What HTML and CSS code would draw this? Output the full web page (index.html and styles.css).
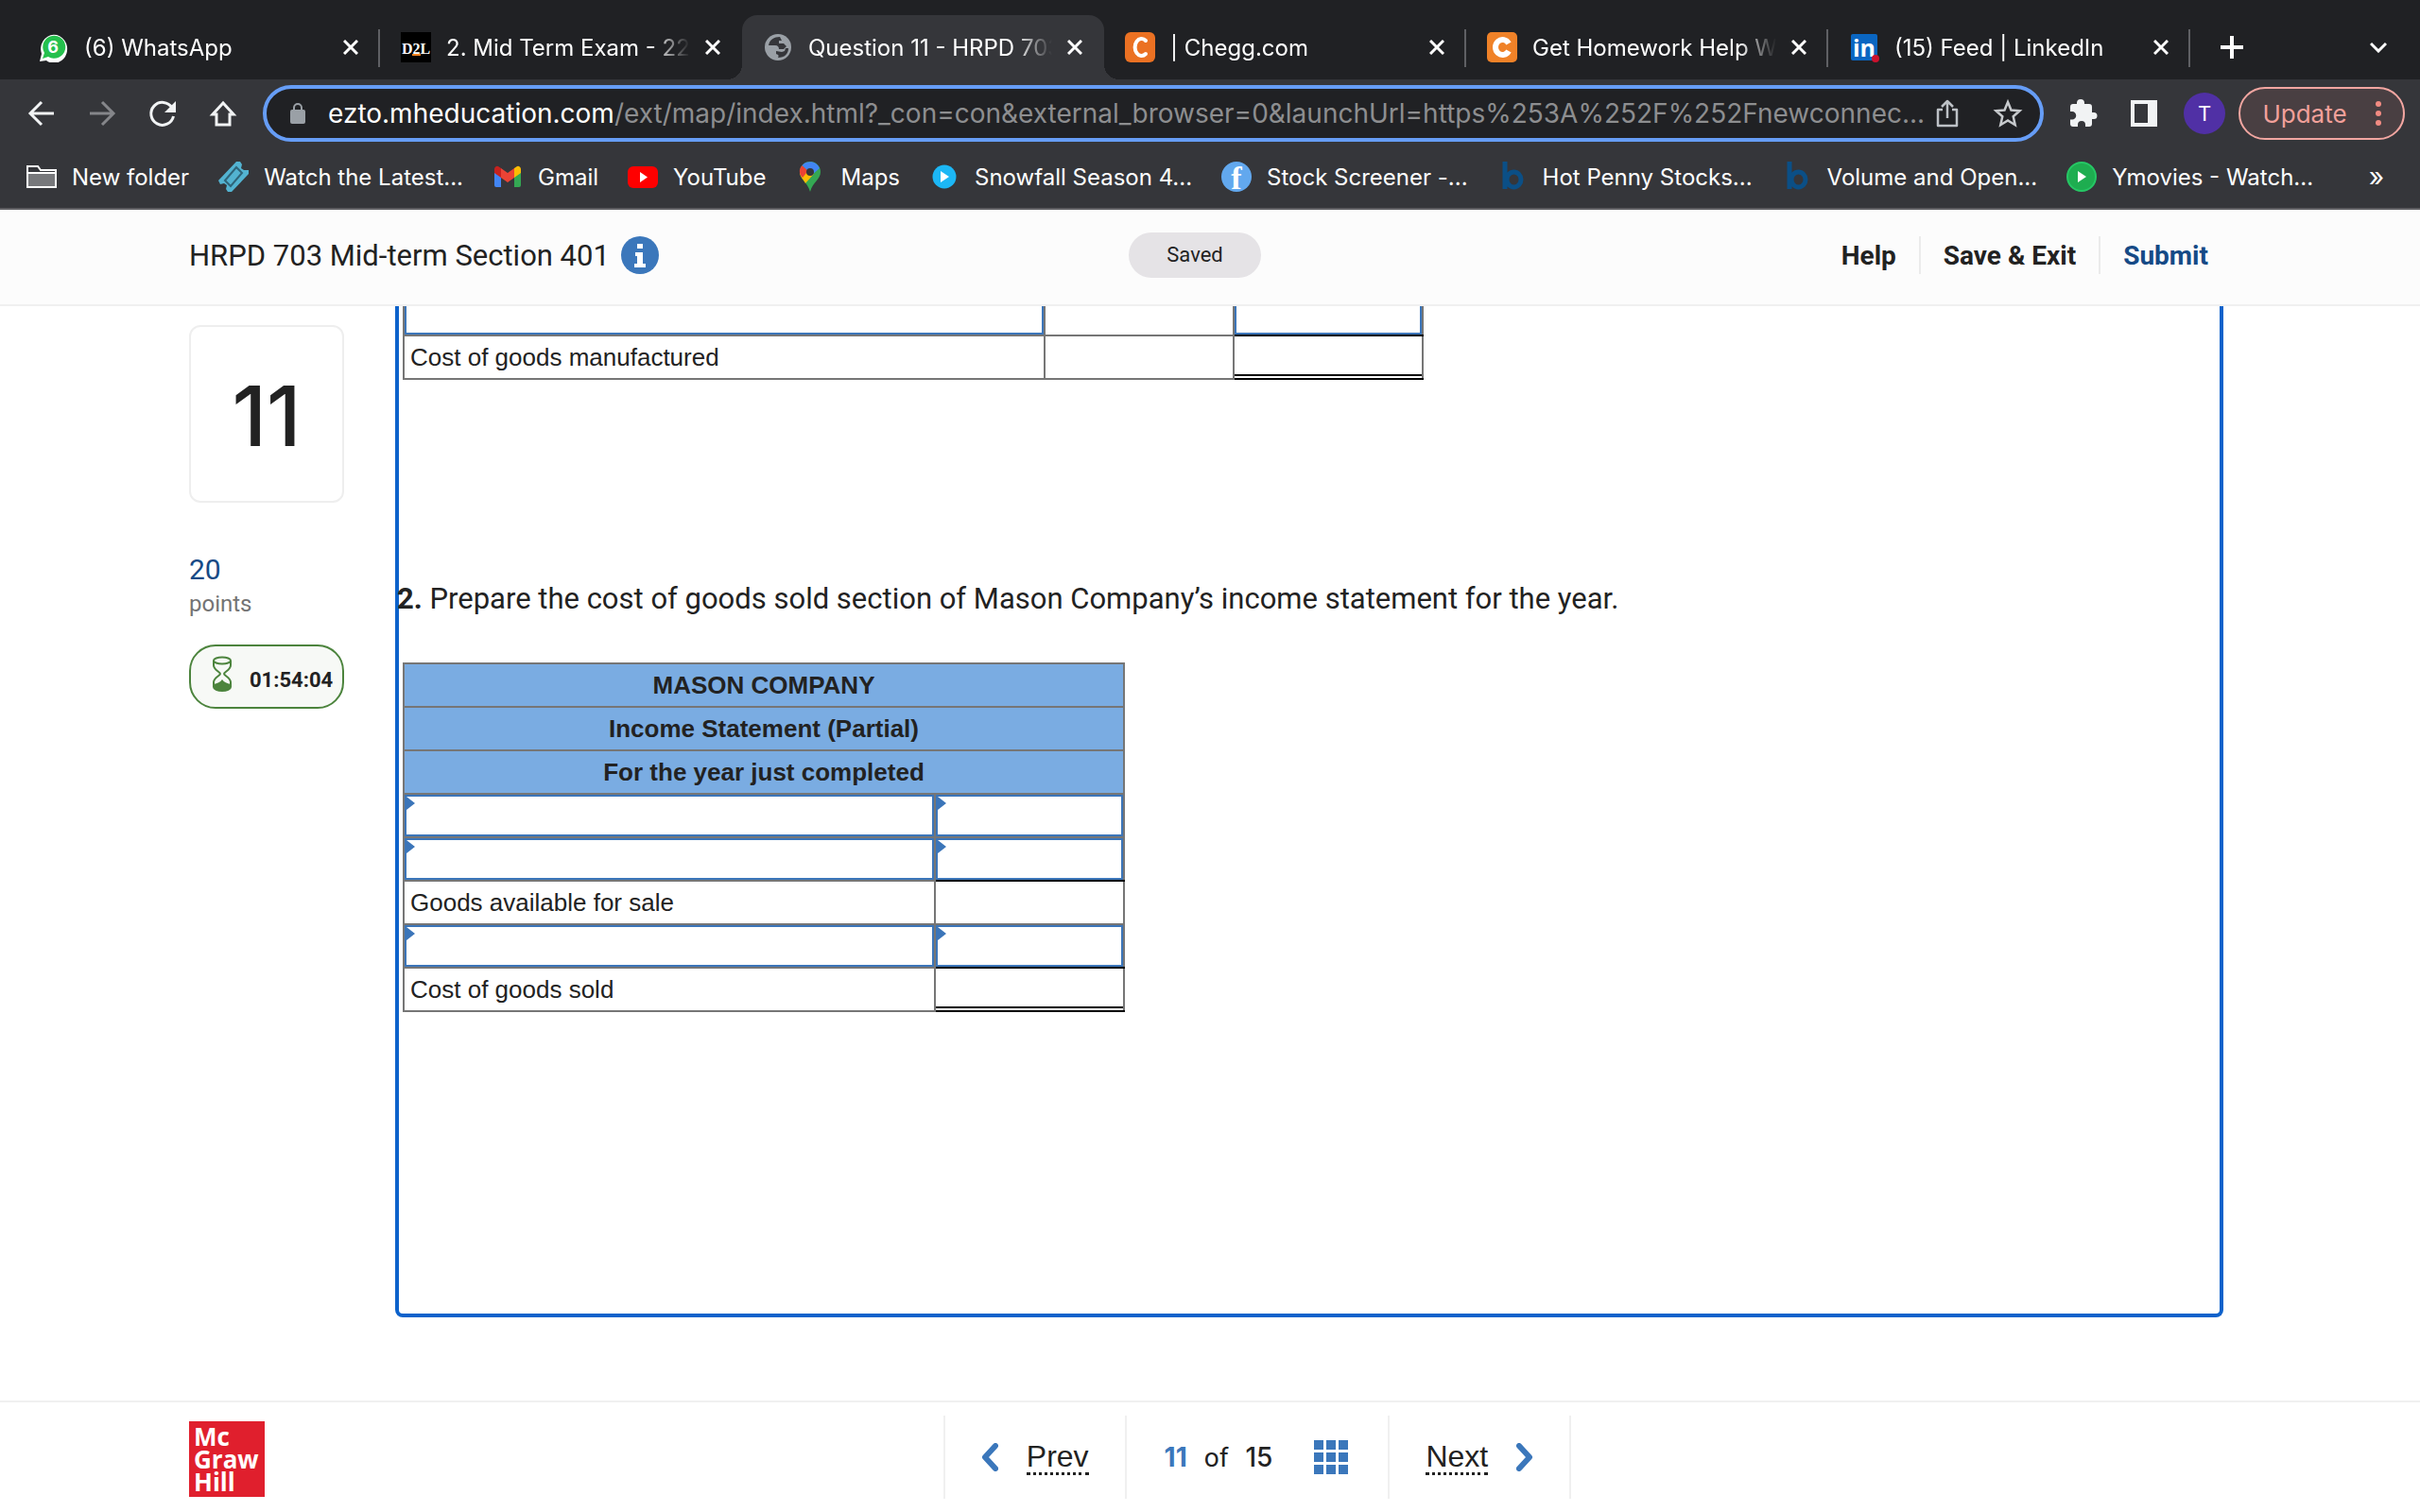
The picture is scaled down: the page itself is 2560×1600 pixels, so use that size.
FILE: index.html
```html
<!DOCTYPE html>
<html lang="en">
<head>
    <meta charset="utf-8">
    <title>Question 11 - HRPD 703 Mid-term Section 401</title>
    <link rel="stylesheet" href="styles.css">
</head>
<body>
    <!-- shared icons -->
    <svg width="0" height="0" class="defs">
        <symbol id="x" viewBox="0 0 16 16"><path d="M1 1l14 14M15 1L1 15" stroke="currentColor" stroke-width="3" fill="none"/></symbol>
        <symbol id="chevron" viewBox="0 0 18 30"><path d="M15 3L4 15l11 12" stroke="currentColor" stroke-width="6" stroke-linecap="round" stroke-linejoin="round" fill="none"/></symbol>
        <symbol id="bar" viewBox="0 0 32 32"><path d="M8 0v29M10 19a7.500 8 0 1 1 15 0a7.500 8 0 1 1-15 0" stroke="#0b4f86" stroke-width="5" fill="none"/></symbol>
    </svg>

    <div class="tabs">
        <div class="tab">
            <svg class="icon" viewBox="0 0 32 32"><path d="M1 31l2-8A14 15 0 1 1 8 30z" fill="#fff"/><path d="M4 28l2-6a12 12 0 1 1 4 4z" fill="#25c04d"/><text x="15" y="22" text-anchor="middle" class="badge-text">6</text></svg>
            <button class="tab-title">(6) WhatsApp</button>
            <button class="close" aria-label="Close tab"><svg><use href="#x"/></svg></button>
        </div>
        <div class="tab">
            <svg class="icon" viewBox="0 0 32 32"><rect width="32" height="32"/><text x="16" y="23" text-anchor="middle" class="d2l-text">D2L</text><path d="M12 23h9v2h-9z" fill="#f58220"/></svg>
            <button class="tab-title">2. Mid Term Exam - 22F --</button>
            <button class="close" aria-label="Close tab"><svg><use href="#x"/></svg></button>
        </div>
        <div class="tab active">
            <svg class="icon" viewBox="0 0 32 32"><circle cx="16" cy="16" r="14" fill="#9aa0a6"/><path d="M18 5c-6 0-11 3-12 9h7c3 0 4 2 4 4h5l3-3-3-3h-5V9h3zM27 17c0 6-4 10-11 10 1-2 1-3-2-4v-3l6 1 3-1 1-3z" fill="#35363a"/></svg>
            <button class="tab-title">Question 11 - HRPD 703 Mid</button>
            <button class="close" aria-label="Close tab"><svg><use href="#x"/></svg></button>
        </div>
        <div class="tab">
            <svg class="icon" viewBox="0 0 32 32"><rect width="32" height="32" rx="6" fill="#eb7123"/><path d="M22 9A7 9 0 1 0 22 23" stroke="#fff" stroke-width="4" stroke-linecap="round" fill="none"/></svg>
            <button class="tab-title">| Chegg.com</button>
            <button class="close" aria-label="Close tab"><svg><use href="#x"/></svg></button>
        </div>
        <div class="tab">
            <svg class="icon" viewBox="0 0 32 32"><rect width="32" height="32" rx="5" fill="#f08228"/><path d="M23 12A7.500 8 0 1 0 23 20" stroke="#fff" stroke-width="6" fill="none"/></svg>
            <button class="tab-title">Get Homework Help With</button>
            <button class="close" aria-label="Close tab"><svg><use href="#x"/></svg></button>
        </div>
        <div class="tab">
            <svg class="icon" viewBox="0 0 32 32"><rect x="2" y="2" width="28" height="28" rx="2" fill="#0a66c2"/><text x="16" y="26" text-anchor="middle" class="in-text">in</text><circle cx="28" cy="28" r="4" fill="#cb112d"/></svg>
            <button class="tab-title">(15) Feed | LinkedIn</button>
            <button class="close" aria-label="Close tab"><svg><use href="#x"/></svg></button>
        </div>
        <button class="new-tab" aria-label="New tab"><svg width="24" height="24" viewBox="0 0 24 24"><path d="M12 0v24M0 12h24" stroke="#fff" stroke-width="4"/></svg></button>
        <button class="tab-list" aria-label="Search tabs"><svg width="18" height="12" viewBox="0 0 18 12"><path d="M1 2l8 8 8-8" stroke="#fff" stroke-width="3" fill="none"/></svg></button>
    </div>

    <div class="toolbar">
        <button aria-label="Back"><svg class="icon" viewBox="0 0 32 32"><path d="M29 16H5M16 4L4 16l12 12" stroke="#f1f3f4" stroke-width="3" fill="none"/></svg></button>
        <button aria-label="Forward"><svg class="icon" viewBox="0 0 32 32"><path d="M3 16h24M16 4l12 12-12 12" stroke="#85868a" stroke-width="3" fill="none"/></svg></button>
        <button aria-label="Reload"><svg class="icon" viewBox="0 0 32 32"><path d="M26 10A12 12 0 1 0 27.500 19" stroke="#f1f3f4" stroke-width="3" fill="none"/><path d="M30 3v12H18z" fill="#f1f3f4"/></svg></button>
        <button aria-label="Home"><svg class="icon" viewBox="0 0 32 32"><path d="M16 5L5 17h4v11h14V17h4z" stroke="#f1f3f4" stroke-width="3" fill="none"/></svg></button>
        <div class="omnibox">
            <svg width="16" height="24" viewBox="0 0 16 24" class="lock"><rect y="8" width="16" height="15" rx="2" fill="#9aa0a6"/><path d="M4 9V6a4 4 0 0 1 8 0v3" stroke="#9aa0a6" stroke-width="2" fill="none"/></svg>
            <label for="url">ezto.mheducation.com</label>
            <input id="url" type="text" value="/ext/map/index.html?_con=con&amp;external_browser=0&amp;launchUrl=https%253A%252F%252Fnewconnec...">
            <button aria-label="Share"><svg class="icon" viewBox="0 0 32 32"><path d="M11 12H6v17h20V12h-5M16 21V4M10 9l6-6 6 6" stroke="#bdc1c6" stroke-width="2.500" fill="none" stroke-linejoin="round"/></svg></button>
            <button aria-label="Bookmark this tab"><svg class="icon" viewBox="0 0 32 32"><path d="M16 4l3.500 8.500 9 .8-6.800 6 2 8.900L16 23.500l-7.700 4.700 2-8.900-6.800-6 9-.8z" stroke="#c7cacd" stroke-width="2.500" fill="none"/></svg></button>
        </div>
        <button aria-label="Extensions"><svg class="icon" viewBox="0 0 32 32"><path d="M27 15h-2V9a3 3 0 0 0-3-3h-5V5a4 4 0 0 0-8 0v1H5a3 3 0 0 0-3 3v5h2a4 4 0 0 1 0 8.500H2V27a3 3 0 0 0 3 3h5v-2a4 4 0 0 1 8 0v2h4a3 3 0 0 0 3-3v-5h2a3.500 3.500 0 0 0 0-7z" fill="#f1f3f4"/></svg></button>
        <button aria-label="Side panel"><svg class="icon" viewBox="0 0 32 32"><path d="M2 2h28v28H2zM6 6v20h14V6z" fill="#f1f3f4" fill-rule="evenodd"/></svg></button>
        <button class="avatar">T</button>
        <button class="update">Update <svg width="6" height="26" viewBox="0 0 6 26"><g fill="#f28b82"><circle cx="3" cy="3" r="3"/><circle cx="3" cy="13" r="3"/><circle cx="3" cy="23" r="3"/></g></svg></button>
    </div>

    <nav class="bookmarks">
        <a href="#"><svg class="icon" viewBox="0 0 32 32"><path d="M1 27V5h11l3 4h16v18z" fill="#35363a" stroke="#fff" stroke-width="2"/><path d="M2 13h28v13H2z" fill="#77787b"/><path d="M1 12h30" stroke="#fff" stroke-width="2"/></svg>New folder</a>
        <a href="#"><svg class="icon" viewBox="0 0 32 32"><path d="M19 0h4l2 3-1 4 3 2h5v4L14 32h-4l-2-3 1-4-3-2-4 1-2-4z" fill="#53b3d1"/><path d="M19 6l6 6-12 14-6-6z" fill="none" stroke="#2f6478" stroke-width="2"/></svg>Watch the Latest...</a>
        <a href="#"><svg class="icon" viewBox="0 0 32 32"><path d="M2 8v17a2 2 0 0 0 2 2h5V13z" fill="#4285f4"/><path d="M30 8v17a2 2 0 0 1-2 2h-5V13z" fill="#34a853"/><path d="M23 7l3-2a3 3 0 0 1 4 3v4l-7 5z" fill="#fbbc04"/><path d="M9 7L6 5a3 3 0 0 0-4 3v4l7 5z" fill="#c5221f"/><path d="M9 7l7 5 7-5v10l-7 5-7-5z" fill="#ea4335"/></svg>Gmail</a>
        <a href="#"><svg class="icon" viewBox="0 0 32 32"><rect y="5" width="32" height="23" rx="6" fill="#f00"/><path d="M13 11v11l8-5.500z" fill="#fff"/></svg>YouTube</a>
        <a href="#"><svg class="icon" viewBox="0 0 32 32"><path d="M16 0a11 11 0 0 1 11 11c0 8-8 10-11 21C13 21 5 19 5 11A11 11 0 0 1 16 0z" fill="#34a853"/><path d="M5 12c1 5 4 7 6 11l9-10-6-4z" fill="#fbbc04"/><path d="M7.500 4L14 9.500 8 17c-3-3-5-8-.5-13z" fill="#ea4335"/><path d="M7.500 4A11 11 0 0 1 26 7l-9 8-4-6z" fill="#4285f4"/><circle cx="16" cy="11" r="4" fill="#35363a"/></svg>Maps</a>
        <a href="#"><svg class="icon" viewBox="0 0 32 32"><circle cx="16" cy="16" r="12.500" fill="#1cb7f5"/><path d="M12 10v12l9-6z" fill="#fff"/></svg>Snowfall Season 4...</a>
        <a href="#"><svg class="icon" viewBox="0 0 32 32"><circle cx="16" cy="16" r="16" fill="#62a8ee"/><text x="16" y="29" text-anchor="middle" class="f-text">f</text></svg>Stock Screener -...</a>
        <a href="#"><svg class="icon"><use href="#bar"/></svg>Hot Penny Stocks...</a>
        <a href="#"><svg class="icon"><use href="#bar"/></svg>Volume and Open...</a>
        <a href="#"><svg class="icon" viewBox="0 0 32 32"><circle cx="16" cy="16" r="15" fill="#1ead50" stroke="#26c765" stroke-width="2"/><path d="M12 10v12l9-6z" fill="#fff"/></svg>Ymovies - Watch...</a>
        <button class="more" aria-label="More bookmarks">»</button>
    </nav>

    <header class="header">
        <div class="title">
            <h1>HRPD 703 Mid-term Section 401</h1>
            <button aria-label="Assignment info"><svg width="40" height="40" viewBox="0 0 40 40"><circle cx="20" cy="20" r="20" fill="#3b77bb"/><path d="M17 8h6v5h-6zM15 17h8v12h3v4H14v-4h3v-8h-2z" fill="#fff"/></svg></button>
        </div>
        <span class="saved">Saved</span>
        <div class="actions">
            <button>Help</button>
            <button>Save &amp; Exit</button>
            <button class="submit">Submit</button>
        </div>
    </header>

    <main>
        <aside>
            <div class="number">11</div>
            <div class="points"><b>20</b>points</div>
            <div class="timer">
                <svg width="22" height="38" viewBox="0 0 22 38"><path d="M2 5v5c0 5 7 7 7 9s-7 4-7 9v5c0 2 4 4 9 4s9-2 9-4v-5c0-5-7-7-7-9s7-4 7-9V5" fill="none" stroke="#4c843d" stroke-width="2"/><ellipse cx="11" cy="5" rx="9" ry="3.500" fill="none" stroke="#4c843d" stroke-width="2"/><path d="M2 30c4-1 7-2 9-5 2 3 5 4 9 5v4c-4 4-14 4-18 0z" fill="#4c843d"/></svg>
                <span>01:54:04</span>
            </div>
        </aside>

        <section class="question">
            <table class="sheet wide">
                <colgroup><col class="wide-label"><col><col></colgroup>
                <tr>
                    <td class="entry"><input type="text" aria-label="Schedule line"></td>
                    <td></td>
                    <td class="entry total"><input type="text" aria-label="Schedule amount"></td>
                </tr>
                <tr>
                    <td>Cost of goods manufactured</td>
                    <td></td>
                    <td class="grand"></td>
                </tr>
            </table>

            <p><b>2.</b> Prepare the cost of goods sold section of Mason Company’s income statement for the year.</p>

            <table class="sheet">
                <colgroup><col class="label"><col></colgroup>
                <tr><th colspan="2">MASON COMPANY</th></tr>
                <tr><th colspan="2">Income Statement (Partial)</th></tr>
                <tr><th colspan="2">For the year just completed</th></tr>
                <tr>
                    <td class="entry"><input type="text" aria-label="Line 1"></td>
                    <td class="entry"><input type="text" aria-label="Amount 1"></td>
                </tr>
                <tr>
                    <td class="entry"><input type="text" aria-label="Line 2"></td>
                    <td class="entry total"><input type="text" aria-label="Amount 2"></td>
                </tr>
                <tr>
                    <td>Goods available for sale</td>
                    <td></td>
                </tr>
                <tr>
                    <td class="entry"><input type="text" aria-label="Line 3"></td>
                    <td class="entry total"><input type="text" aria-label="Amount 3"></td>
                </tr>
                <tr>
                    <td>Cost of goods sold</td>
                    <td class="grand"></td>
                </tr>
            </table>
        </section>
    </main>

    <footer>
        <div class="logo">Mc<br>Graw<br>Hill</div>
        <nav class="pager">
            <a href="#" class="step"><svg class="chevron"><use href="#chevron"/></svg><span>Prev</span></a>
            <div class="count"><b>11</b> <span>of</span> <i>15</i>
                <button aria-label="Question list"><svg width="36" height="36" viewBox="0 0 36 36"><path d="M0 0h10v10H0zM13 0h10v10H13zM26 0h10v10H26zM0 13h10v10H0zM13 13h10v10H13zM26 13h10v10H26zM0 26h10v10H0zM13 26h10v10H13zM26 26h10v10H26z" fill="#3b77bb"/></svg></button>
            </div>
            <a href="#" class="step"><span>Next</span><svg class="chevron next"><use href="#chevron"/></svg></a>
        </nav>
    </footer>
</body>
</html>
```
FILE: styles.css
```css
* {
    box-sizing: border-box;
}
body {
    margin: 0;
    min-height: 100vh;
    display: flex;
    flex-direction: column;
    background: #fff;
    color: #222;
    font-family: Roboto, sans-serif;
}
button {
    padding: 0;
    border: none;
    background: none;
    color: inherit;
    font: inherit;
    cursor: pointer;
}
svg {
    display: block;
    flex: none;
}
a {
    color: inherit;
    text-decoration: none;
}
.defs {
    position: absolute;
}
.icon {
    width: 32px;
    height: 32px;
}

/* browser tabs */
.tabs, .toolbar, .bookmarks {
    display: flex;
    align-items: center;
    color: #fff;
    font-family: Inter, sans-serif;
    font-size: 24px;
}
.tabs {
    height: 84px;
    padding: 16px 35px 0 19px;
    background: #202124;
}
.tab {
    position: relative;
    flex: 0 1 383px;
    min-width: 0;
    height: 68px;
    padding: 0 23px 0 22px;
    display: flex;
    align-items: center;
    gap: 16px;
}
.tab-title {
    flex: 1;
    height: 32px;
    overflow: hidden;
    white-space: nowrap;
    text-align: left;
    -webkit-mask-image: linear-gradient(to right, #000 calc(100% - 40px), transparent);
    mask-image: linear-gradient(to right, #000 calc(100% - 40px), transparent);
}
.close svg {
    width: 16px;
    height: 16px;
}
/* thin line between inactive tabs */
.tab::after {
    content: "";
    position: absolute;
    right: 0;
    top: 15px;
    width: 2px;
    height: 40px;
    background: #5f6064;
}
.tab.active {
    background: #35363a;
    border-radius: 16px 16px 0 0;
}
.tab.active::before, .tab.active::after {
    content: "";
    position: absolute;
    top: auto;
    bottom: 0;
    width: 16px;
    height: 16px;
}
.tab.active::before {
    left: -16px;
    background: radial-gradient(circle at 0 0, transparent 16px, #35363a 16px);
}
.tab.active::after {
    right: -16px;
    background: radial-gradient(circle at 100% 0, transparent 16px, #35363a 16px);
}
.tab:has(+ .active)::after {
    display: none;
}
.new-tab {
    margin-left: 32px;
}
.tab-list {
    margin-left: auto;
}

/* toolbar */
.toolbar {
    height: 72px;
    padding: 0 16px 0 28px;
    gap: 32px;
    background: #35363a;
}
.omnibox {
    flex: 1;
    min-width: 0;
    height: 60px;
    margin-left: -6px;
    margin-right: -6px;
    padding: 0 18px 0 25px;
    display: flex;
    align-items: center;
    gap: 32px;
    border: 4px solid #669df6;
    border-radius: 30px;
    background: #202124;
    font-size: 28px;
}
.omnibox label {
    margin-left: -8px;
}
.omnibox input {
    flex: 1;
    min-width: 0;
    margin-left: -32px;
    margin-right: -28px;
    padding: 0;
    border: none;
    outline: none;
    background: none;
    color: #8d8e90;
    font: inherit;
    text-overflow: ellipsis;
}
.avatar {
    width: 44px;
    height: 44px;
    margin: 0 -6px;
    border-radius: 50%;
    background: #5030a5;
    font-size: 22px;
}
.update {
    width: 176px;
    height: 56px;
    margin-left: -12px;
    display: flex;
    align-items: center;
    justify-content: center;
    gap: 30px;
    border: 2px solid #f2a6a1;
    border-radius: 28px;
    background: #493f42;
    color: #f2a09a;
    font-size: 26px;
}

/* bookmarks bar */
.bookmarks {
    height: 66px;
    padding: 0 38px 2px 28px;
    gap: 31px;
    border-bottom: 2px solid #5f5e62;
    background: #35363a;
    white-space: nowrap;
}
.bookmarks a {
    display: flex;
    align-items: center;
    gap: 16px;
}
.more {
    margin-left: auto;
    font-size: 28px;
}
.badge-text {
    font: 700 18px Inter, sans-serif;
    fill: #fff;
}
.d2l-text {
    font: 700 16px "Liberation Serif", serif;
    fill: #fff;
}
.in-text {
    font: 700 25px "Open Sans", sans-serif;
    fill: #fff;
}
.f-text {
    font: 700 34px "Liberation Serif", serif;
    fill: #fff;
}

/* assignment header, stays above the scrolled question */
.header {
    position: relative;
    z-index: 1;
    height: 102px;
    padding: 0 224px 4px 192px;
    display: grid;
    grid-template-columns: 1fr auto 1fr;
    align-items: center;
    border-bottom: 2px solid #f0f0f0;
    background: #fcfcfc;
}
.title {
    display: flex;
    align-items: center;
    gap: 12px;
    padding-left: 8px;
}
.title h1 {
    margin: 0;
    font-size: 31px;
    font-weight: 400;
}
.saved {
    width: 140px;
    height: 48px;
    border-radius: 24px;
    background: #e5e3e6;
    font-size: 22px;
    line-height: 48px;
    text-align: center;
}
.actions {
    display: flex;
    justify-content: flex-end;
}
.actions button {
    height: 40px;
    padding: 0 24px;
    border-right: 2px solid #ebebeb;
    font-size: 28px;
    font-weight: 700;
}
.actions .submit {
    padding-right: 0;
    border: none;
    color: #164a86;
}

/* question area */
main {
    flex: 1;
    display: flex;
    gap: 54px;
    padding: 0 208px 88px 200px;
}
aside {
    width: 164px;
    padding-top: 20px;
}
.number {
    height: 188px;
    border: 2px solid #eee;
    border-radius: 12px;
    font-family: Inter, sans-serif;
    font-size: 88px;
    font-weight: 500;
    line-height: 188px;
    text-align: center;
}
.points {
    margin-top: 52px;
    color: #747474;
    font-size: 24px;
    line-height: 34px;
}
.points b {
    display: block;
    color: #164a86;
    font-size: 30px;
    font-weight: 400;
    line-height: 38px;
}
.timer {
    height: 68px;
    margin-top: 26px;
    padding: 10px 0 0 22px;
    display: flex;
    align-items: flex-start;
    gap: 18px;
    border: 2px solid #4c843d;
    border-radius: 28px;
    background: #f7f9f6;
    font-size: 22px;
    font-weight: 700;
}
.timer span {
    padding-top: 4px;
    line-height: 44px;
}
.question {
    flex: 1;
    border: 4px solid #0d62cb;
    border-top: none;
    border-radius: 0 0 8px 8px;
}
.question p {
    margin: 212px 0 47px -2px;
    font-size: 31px;
    line-height: 40px;
}
.sheet {
    width: 764px;
    margin-left: 4px;
    border-collapse: collapse;
    table-layout: fixed;
    font-family: "Liberation Sans", Arial, sans-serif;
    font-size: 26px;
    line-height: 30px;
}
.sheet.wide {
    width: 1080px;
    margin-top: -16px;
}
.label {
    width: 562px;
}
.wide-label {
    width: 678px;
}
.sheet th, .sheet td {
    position: relative;
    height: 46px;
    padding: 0 6px;
    border: 2px solid #767676;
    text-align: left;
}
.sheet th {
    background: #7aace2;
    text-align: center;
}
.sheet .entry {
    padding: 0;
}
.entry input {
    display: block;
    width: 100%;
    height: 44px;
    padding: 0 12px;
    border: 2px solid #3b75b9;
    outline: none;
    font: inherit;
}
/* blue marker in the corner of each answer cell */
.entry::before {
    content: "";
    position: absolute;
    left: 2px;
    top: 2px;
    border: 7px solid transparent;
    border-left: 9px solid #3b75b9;
    border-right: none;
}
/* the top table is scrolled, its markers are under the header */
.wide .entry::before {
    display: none;
}
.sheet .total {
    border-bottom-color: #000;
}
.sheet .grand {
    border-bottom-color: #000;
    box-shadow: inset 0 -2px #fff, inset 0 -4px #000;
}

/* footer */
footer {
    height: 118px;
    padding: 0 180px 0 200px;
    display: flex;
    align-items: center;
    border-top: 2px solid #f0f0f0;
}
.logo {
    width: 80px;
    height: 80px;
    margin-top: 4px;
    padding: 4px 5px;
    background: #e01f2d;
    color: #fff;
    font-family: "Open Sans", sans-serif;
    font-size: 26px;
    font-weight: 700;
    line-height: 24px;
}
.pager {
    flex: 1;
    height: 88px;
    display: flex;
    justify-content: center;
}
.pager > * {
    display: flex;
    align-items: center;
    border-right: 2px solid #f0f0f0;
}
.pager > :first-child {
    border-left: 2px solid #f0f0f0;
}
.step {
    padding: 0 38px;
    gap: 30px;
    font-family: "Liberation Sans", Arial, sans-serif;
    font-size: 32px;
    line-height: 34px;
}
.step span {
    border-bottom: 3px dotted #222;
}
.chevron {
    width: 18px;
    height: 30px;
    color: #3b77bb;
}
.next {
    transform: scaleX(-1);
}
.count {
    padding: 0 42px 0 40px;
    gap: 18px;
    font-size: 28px;
}
.count b, .count i {
    font-family: Inter, sans-serif;
    font-style: normal;
    font-weight: 500;
}
.count b {
    color: #3b77bb;
    font-weight: 700;
}
.count button {
    margin-left: 26px;
}
```
